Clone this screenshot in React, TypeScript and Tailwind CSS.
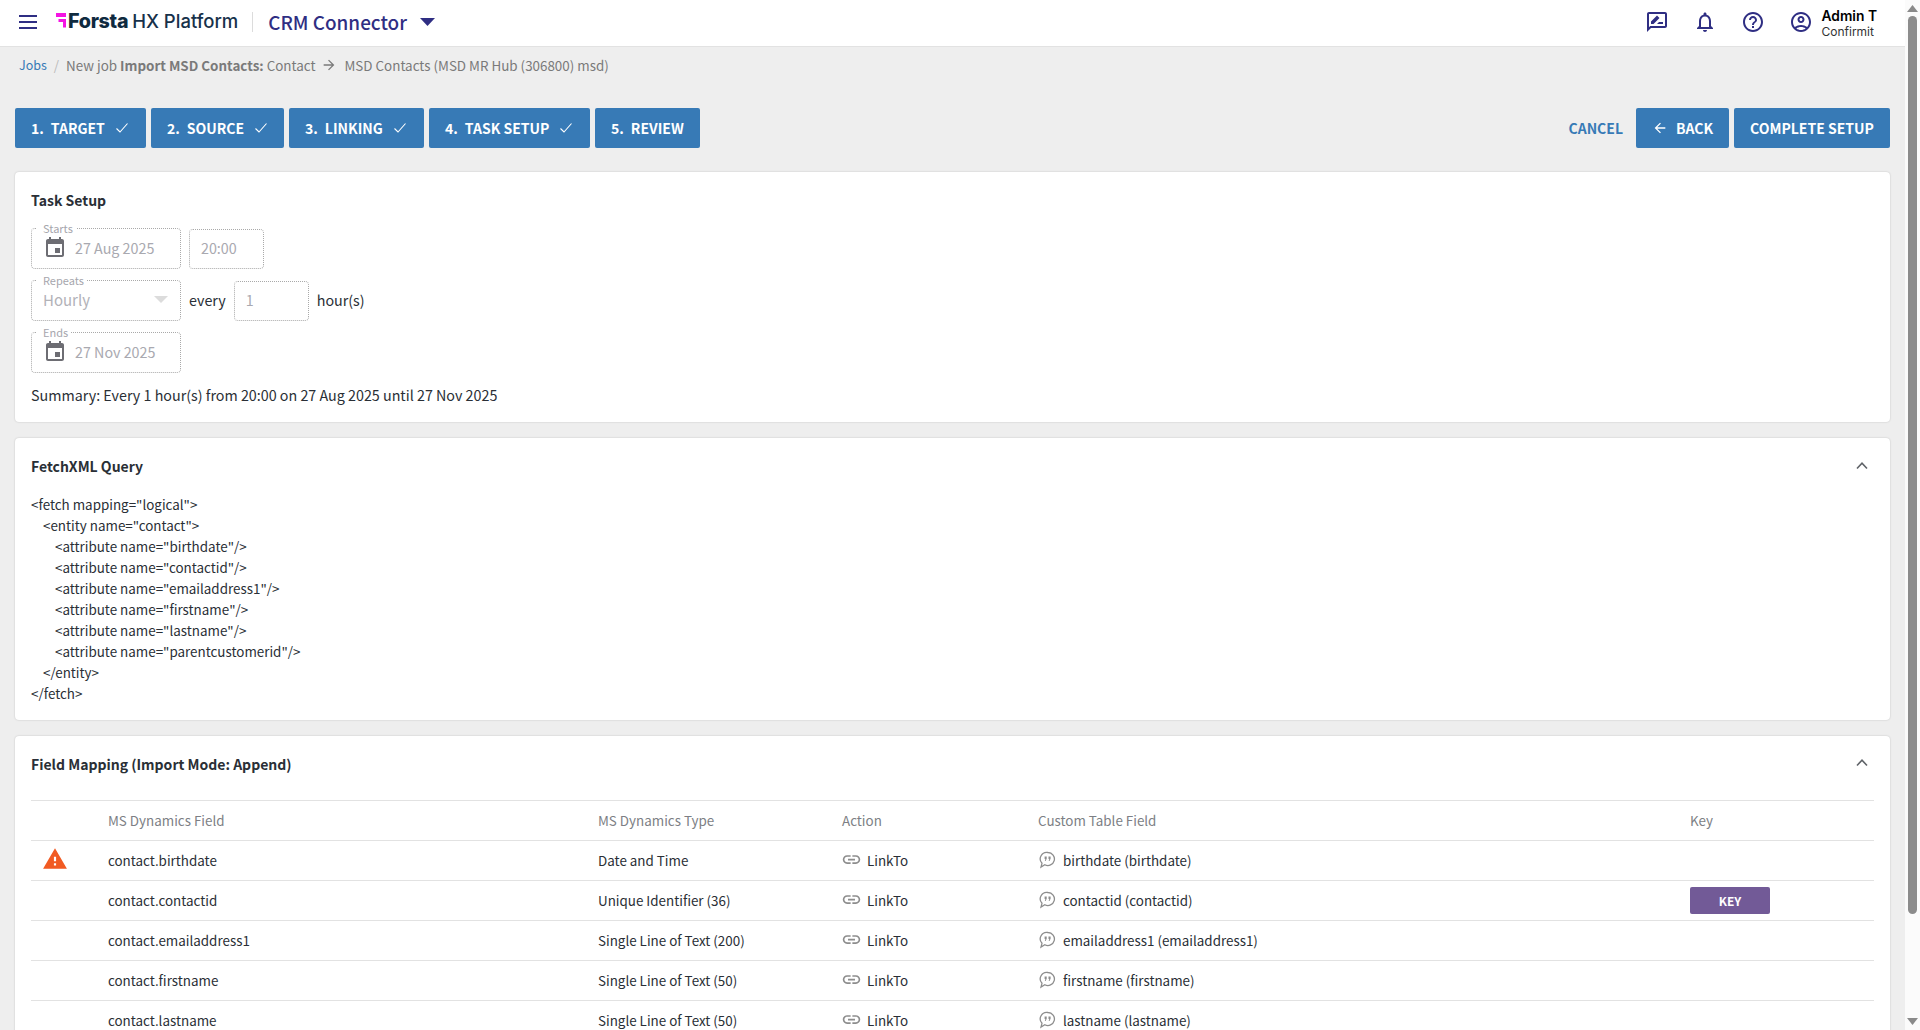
import React from "react";

const FONT = "font-['Noto_Sans_CJK_JP','Liberation_Sans',sans-serif]";

function Mi({ d, size = 24, className = "" }: { d: string; size?: number; className?: string }) {
  return (
    <svg width={size} height={size} viewBox="0 0 24 24" fill="currentColor" className={className}>
      <path d={d} />
    </svg>
  );
}

const ICONS = {
  review:
    "M20 2H4c-1.100 0-2 .9-2 2v18l4-4h14c1.100 0 2-.9 2-2V4c0-1.100-.9-2-2-2zm0 14H5.170L4 17.170V4h16v12zM6 14h2.500l6-6L12 5.500l-6 6V14zm6 0h6v-2h-4l-2 2z",
  bell:
    "M12 22c1.100 0 2-.9 2-2h-4c0 1.100.9 2 2 2zm6-6v-5c0-3.070-1.630-5.640-4.500-6.320V4c0-.83-.67-1.500-1.500-1.500s-1.500.67-1.500 1.500v.68C7.640 5.360 6 7.920 6 11v5l-2 2v1h16v-1l-2-2zm-2 1H8v-6c0-2.480 1.510-4.500 4-4.500s4 2.020 4 4.500v6z",
  help:
    "M11 18h2v-2h-2v2zm1-16C6.480 2 2 6.480 2 12s4.480 10 10 10 10-4.480 10-10S17.520 2 12 2zm0 18c-4.410 0-8-3.590-8-8s3.590-8 8-8 8 3.590 8 8-3.590 8-8 8zm0-14c-2.210 0-4 1.790-4 4h2c0-1.100.9-2 2-2s2 .9 2 2c0 2-3 1.750-3 5h2c0-2.250 3-2.500 3-5 0-2.210-1.790-4-4-4z",
  account:
    "M12 2C6.480 2 2 6.480 2 12s4.480 10 10 10 10-4.480 10-10S17.520 2 12 2zM7.350 18.500C8.660 17.560 10.260 17 12 17s3.340.56 4.650 1.500c-1.310.94-2.910 1.500-4.650 1.500s-3.340-.56-4.650-1.500zm10.790-1.380C16.450 15.800 14.320 15 12 15s-4.450.8-6.140 2.120C4.700 15.730 4 13.950 4 12c0-4.420 3.580-8 8-8s8 3.580 8 8c0 1.950-.7 3.730-1.860 5.120zM12 6c-1.930 0-3.500 1.570-3.500 3.500S10.070 13 12 13s3.500-1.570 3.500-3.500S13.930 6 12 6zm0 5c-.83 0-1.500-.67-1.500-1.500S11.170 8 12 8s1.500.67 1.500 1.500S12.830 11 12 11z",
  event:
    "M17 12h-5v5h5v-5zM16 1v2H8V1H6v2H5c-1.110 0-1.990.9-1.990 2L3 19c0 1.100.89 2 2 2h14c1.100 0 2-.9 2-2V5c0-1.100-.9-2-2-2h-1V1h-2zm3 18H5V8h14v11z",
  warning: "M1 21h22L12 2 1 21zm12-3h-2v-2h2v2zm0-4h-2v-4h2v4z",
  link:
    "M3.900 12c0-1.710 1.390-3.100 3.100-3.100h4V7H7c-2.760 0-5 2.240-5 5s2.240 5 5 5h4v-1.900H7c-1.710 0-3.100-1.390-3.100-3.100zM8 13h8v-2H8v2zm9-6h-4v1.900h4c1.710 0 3.100 1.390 3.100 3.100s-1.390 3.100-3.100 3.100h-4V17h4c2.760 0 5-2.240 5-5s-2.240-5-5-5z",
  back: "M20 11H7.830l5.590-5.590L12 4l-8 8 8 8 1.410-1.410L7.830 13H20v-2z",
};

function Check() {
  return (
    <svg width="14" height="14" viewBox="0 0 14 14" fill="none" stroke="currentColor" strokeWidth="1.100" className="ml-[10px]">
      <path d="M1.500 7.500 5 11l7.500-8.500" />
    </svg>
  );
}

function Chevron() {
  return (
    <svg width="14" height="9" viewBox="0 0 14 9" fill="none" stroke="#5f6368" strokeWidth="1.600">
      <path d="M2 7.500 7 2.200l5 5.300" />
    </svg>
  );
}

function Quote() {
  return (
    <svg width="18" height="18" viewBox="0 0 18 18" fill="none" className="text-[#8d8d8d] -mt-[1px]">
      <path
        d="M10 1.500a6.500 6.500 0 1 1-3.200 12.200L3 16l1-3.700A6.500 6.500 0 0 1 10 1.500Z"
        stroke="currentColor"
        strokeWidth="1.300"
      />
      <path d="M6.600 5.500h2.100v2.300L7.600 10H6.800l.6-2H6.600zM10.500 5.500h2.100v2.300L11.500 10h-.8l.6-2h-.8z" fill="currentColor" />
    </svg>
  );
}

function Step({ n, label, done, w }: { n: number; label: string; done?: boolean; w: string }) {
  return (
    <div className={`${w} h-10 bg-[#377ab6] rounded-[2px] flex items-center pl-4 text-white text-[14px] font-semibold whitespace-pre`}>
      <span>{n}.</span>
      <span className="ml-[7px]">{label}</span>
      {done && <Check />}
    </div>
  );
}

function Field({ label, children }: { label: string; children: React.ReactNode }) {
  return (
    <fieldset className="w-[150px] h-[41px] border border-dotted border-[#a9a9a9] rounded-[4px] -mt-[1px] min-w-0">
      <legend className="ml-[4px] pl-[7px] pr-[3px] text-[11px] leading-[11px] text-[#a6a6ad] h-[1px]">
        <span className="relative -top-[5px]">{label}</span>
      </legend>
      <div className="h-full flex items-center pl-[11px] pb-[1px]">{children}</div>
    </fieldset>
  );
}

function DateField({ label, value }: { label: string; value: string }) {
  return (
    <Field label={label}>
      <span className="flex items-center">
        <Mi d={ICONS.event} size={24} className="text-[#6d6d73]" />
        <span className="ml-[8px] text-[#a9a9b0] text-[14.3px]">{value}</span>
      </span>
    </Field>
  );
}

const ROWS = [
  ["contact.birthdate", "Date and Time", "birthdate (birthdate)", "warn"],
  ["contact.contactid", "Unique Identifier (36)", "contactid (contactid)", "key"],
  ["contact.emailaddress1", "Single Line of Text (200)", "emailaddress1 (emailaddress1)", ""],
  ["contact.firstname", "Single Line of Text (50)", "firstname (firstname)", ""],
  ["contact.lastname", "Single Line of Text (50)", "lastname (lastname)", ""],
];

const XML = [
  ["", '<fetch mapping="logical">'],
  ["pl-3", '<entity name="contact">'],
  ["pl-6", '<attribute name="birthdate"/>'],
  ["pl-6", '<attribute name="contactid"/>'],
  ["pl-6", '<attribute name="emailaddress1"/>'],
  ["pl-6", '<attribute name="firstname"/>'],
  ["pl-6", '<attribute name="lastname"/>'],
  ["pl-6", '<attribute name="parentcustomerid"/>'],
  ["pl-3", "</entity>"],
  ["", "</fetch>"],
];

export default function App() {
  return (
    <div className={`${FONT} h-screen overflow-hidden flex bg-[#eeeeee] text-[14.3px] text-[#2a2f36]`}>
      <div className="flex-1 min-w-0 flex flex-col">
        {/* top bar */}
        <header className="h-[47px] shrink-0 bg-white border-b border-[#e2e2e2] flex items-center pb-[2px] text-[#2f2e83]">
          <div className="ml-[19px] w-[18px] flex flex-col gap-[4px]">
            <span className="h-[2px] bg-[#2f2e83]" />
            <span className="h-[2px] bg-[#2f2e83]" />
            <span className="h-[2px] bg-[#2f2e83]" />
          </div>
          <svg width="10" height="15" viewBox="0 0 10 15" className="ml-[19px] -mt-[3px]">
            <path d="M0 0h10v4H0zM2.500 6H10v3H2.500zM7 9h3v5.500H7z" fill="#f414e2" />
          </svg>
          <span className="ml-[2px] font-['Inter',sans-serif] font-extrabold text-[19.700px] tracking-[-0.3px] text-[#0f2a3f]">Forsta</span>
          <span className="ml-[4px] font-['Inter',sans-serif] font-medium text-[18.500px] text-[#17314a]">HX Platform</span>
          <span className="ml-[14px] w-px h-[20px] bg-[#dcdcdc]" />
          <span className="ml-[15px] text-[18.900px] font-medium">CRM Connector</span>
          <svg width="15" height="8" viewBox="0 0 15 8" className="ml-[13px]">
            <path d="M0 0h15L7.500 8z" fill="#2f2e83" />
          </svg>
          <div className="ml-auto flex items-center">
            <Mi d={ICONS.review} size={24} className="mr-[24px]" />
            <Mi d={ICONS.bell} size={24} className="mr-[24px]" />
            <Mi d={ICONS.help} size={24} className="mr-[24px]" />
            <Mi d={ICONS.account} size={24} />
            <div className="ml-[9px] mr-[28px] mt-[3px] font-['Inter',sans-serif] leading-[16px] text-black">
              <div className="text-[13.800px] font-semibold">Admin T</div>
              <div className="text-[12px] text-[#333]">Confirmit</div>
            </div>
          </div>
        </header>

        {/* breadcrumb */}
        <div className="h-[36px] shrink-0 pl-[19px] flex items-center text-[13.400px] text-[#7a7a7a]">
          <span className="text-[12.500px] text-[#377ab6]">Jobs</span>
          <span className="mx-[7px] text-[#bbb]">/</span>
          <span>New job&nbsp;</span>
          <span className="font-bold">Import MSD Contacts:</span>
          <span>&nbsp;Contact</span>
          <Mi d={ICONS.back} size={16} className="ml-[6px] mr-[7px] rotate-180" />
          <span>MSD Contacts (MSD MR Hub (306800) msd)</span>
        </div>

        {/* wizard */}
        <div className="mt-[25px] h-10 shrink-0 pl-[15px] pr-[15px] flex items-center gap-[5px]">
          <Step n={1} label="TARGET" done w="w-[131px]" />
          <Step n={2} label="SOURCE" done w="w-[133px]" />
          <Step n={3} label="LINKING" done w="w-[135px]" />
          <Step n={4} label="TASK SETUP" done w="w-[161px]" />
          <Step n={5} label="REVIEW" w="w-[105px]" />
          <span className="ml-auto mr-[8px] text-[14px] font-semibold text-[#377ab6]">CANCEL</span>
          <div className="w-[93px] h-10 bg-[#377ab6] rounded-[2px] flex items-center pl-4 text-white text-[14px] font-semibold">
            <Mi d={ICONS.back} size={16} />
            <span className="ml-[8px]">BACK</span>
          </div>
          <div className="w-[156px] h-10 bg-[#377ab6] rounded-[2px] flex items-center justify-center text-white text-[14px] font-semibold">
            COMPLETE SETUP
          </div>
        </div>

        {/* cards */}
        <div className="mt-[24px] px-[15px] flex flex-col gap-[16px]">
          <section className="h-[250px] bg-white rounded-[4px] shadow-[0_0_2px_rgba(0,0,0,0.2)] px-[16px] pt-[18px]">
            <h2 className="text-[14px] leading-[20px] font-semibold">Task Setup</h2>
            <div className="mt-[19px] flex items-center gap-[8px] h-[40px]">
              <DateField label="Starts" value="27 Aug 2025" />
              <div className="w-[75px] h-[40px] border border-dotted border-[#a9a9a9] rounded-[4px] flex items-center pl-[11px] pb-[2px] text-[#a9a9b0]">20:00</div>
            </div>
            <div className="mt-[12px] flex items-center gap-[8px] h-[40px]">
              <Field label="Repeats">
                <span className="flex-1 text-[15px] text-[#b2b2b8]">Hourly</span>
                <svg width="14" height="8" viewBox="0 0 14 8" className="mr-[12px]">
                  <path d="M0 0h14L7 7z" fill="#dcdcdc" />
                </svg>
              </Field>
              <span className="pb-[2px]">every</span>
              <div className="w-[75px] h-[40px] border border-dotted border-[#a9a9a9] rounded-[4px] flex items-center pl-[11px] pb-[2px] text-[#a9a9b0]">1</div>
              <span className="pb-[2px]">hour(s)</span>
            </div>
            <div className="mt-[12px] flex items-center h-[40px]">
              <DateField label="Ends" value="27 Nov 2025" />
            </div>
            <p className="mt-[12px] leading-[20px]">Summary: Every 1 hour(s) from 20:00 on 27 Aug 2025 until 27 Nov 2025</p>
          </section>

          <section className="h-[282px] bg-white rounded-[4px] shadow-[0_0_2px_rgba(0,0,0,0.2)] px-[16px] pt-[18px]">
            <div className="flex items-center justify-between pr-[5px]">
              <h2 className="text-[14px] leading-[20px] font-semibold">FetchXML Query</h2>
              <span className="-mt-[2px]"><Chevron /></span>
            </div>
            <div className="mt-[18px] text-[13.400px]">
              {XML.map(([cls, line], i) => (
                <div key={i} className={`${cls} leading-[21px] h-[21px]`}>
                  {line}
                </div>
              ))}
            </div>
          </section>

          <section className="bg-white rounded-[4px] shadow-[0_0_2px_rgba(0,0,0,0.2)] px-[16px] pt-[18px]">
            <div className="h-[46px] flex items-start justify-between pr-[5px]">
              <h2 className="text-[14px] leading-[20px] font-semibold">Field Mapping (Import Mode: Append)</h2>
              <span className="mt-[4px]"><Chevron /></span>
            </div>
            <table className="w-full table-fixed border-collapse text-[13.400px]">
              <colgroup>
                <col className="w-[77px]" />
                <col className="w-[490px]" />
                <col className="w-[244px]" />
                <col className="w-[196px]" />
                <col className="w-[652px]" />
                <col />
              </colgroup>
              <thead>
                <tr className="h-10 border-y border-[#e2e2e2] text-left text-[#7d7f85]">
                  <th />
                  <th className="font-normal">MS Dynamics Field</th>
                  <th className="font-normal">MS Dynamics Type</th>
                  <th className="font-normal">Action</th>
                  <th className="font-normal">Custom Table Field</th>
                  <th className="font-normal">Key</th>
                </tr>
              </thead>
              <tbody>
                {ROWS.map(([f, t, c, x]) => (
                  <tr key={f} className="h-10 border-b border-[#e2e2e2]">
                    <td>
                      {x === "warn" && <Mi d={ICONS.warning} size={26} className="text-[#f15a22] ml-[11px] -mt-[4px]" />}
                    </td>
                    <td>{f}</td>
                    <td>{t}</td>
                    <td>
                      <span className="flex items-center">
                        <Mi d={ICONS.link} size={21} className="text-[#8d8d8d] -ml-[1px] -mt-[2px]" />
                        <span className="ml-[5px]">LinkTo</span>
                      </span>
                    </td>
                    <td>
                      <span className="flex items-center">
                        <Quote />
                        <span className="ml-[7px]">{c}</span>
                      </span>
                    </td>
                    <td>
                      {x === "key" && (
                        <span className="w-[80px] h-[27px] bg-[#725a97] rounded-[2px] flex items-center justify-center text-white text-[12px] font-bold">
                          KEY
                        </span>
                      )}
                    </td>
                  </tr>
                ))}
              </tbody>
            </table>
          </section>
        </div>
      </div>

      {/* page scrollbar */}
      <div className="w-[15px] shrink-0 bg-[#fbfbfb] flex flex-col items-center">
        <svg width="11" height="7" viewBox="0 0 11 7" className="mt-[5px]">
          <path d="M5.500 0 11 7H0z" fill="#8a8a8a" />
        </svg>
        <div className="mt-[4px] w-[9px] h-[898px] bg-[#8c8c8c] rounded-[5px]" />
        <svg width="11" height="7" viewBox="0 0 11 7" className="mt-auto mb-[5px]">
          <path d="M0 0h11L5.500 7z" fill="#8a8a8a" />
        </svg>
      </div>
    </div>
  );
}
